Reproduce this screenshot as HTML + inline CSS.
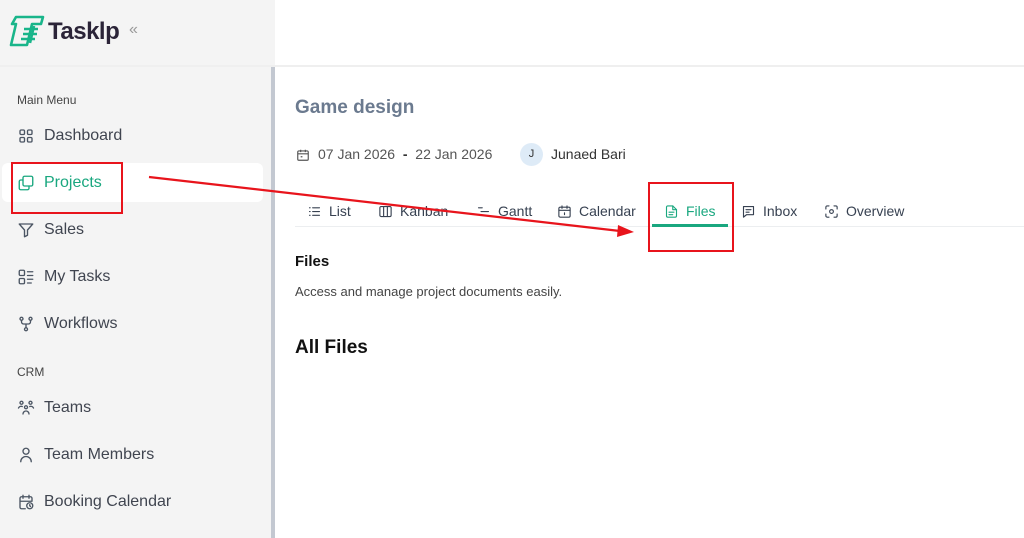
<!DOCTYPE html>
<html><head><meta charset="utf-8"><style>
*{margin:0;padding:0;box-sizing:border-box}
body{width:1024px;height:538px;overflow:hidden;background:#fff;font-family:"Liberation Sans",sans-serif;position:relative;color:#374151}
.a{position:absolute}
.side{left:0;top:0;width:275px;height:538px;background:#f4f4f4}
.hline{left:0;top:65px;width:1024px;height:2px;background:#efefef}
.sb{left:271px;top:67px;width:4px;height:471px;background:#c3c8d1}
.lbl{font-size:12px;color:#444}
.it{left:17px;font-size:16px;color:#404550;line-height:20px;height:20px}
.it span{position:absolute;left:27px;top:0;white-space:nowrap}
.it svg{position:absolute;left:0;top:1px;width:18px;height:18px;fill:none;stroke:#4b5563;stroke-width:1.8;stroke-linecap:round;stroke-linejoin:round}
.tab{top:203px;font-size:14px;color:#374151;line-height:16px;height:16px}
.tab span{position:absolute;left:22px;top:0;white-space:nowrap}
.tab svg{position:absolute;left:0;top:1px;width:15px;height:15px;fill:none;stroke:#374151;stroke-width:1.8;stroke-linecap:round;stroke-linejoin:round}
</style></head><body>
<div class="a side"></div>
<div class="a hline"></div>
<div class="a sb"></div>
<svg class="a" style="left:9px;top:15px" width="36" height="32" viewBox="0 0 36 32" fill="none" stroke="#19b58a" stroke-width="2.6" stroke-linejoin="round"><path d="M7 2H34L32 9H23L18 30H2L7 9H3Z"/><path d="M15 14H29M14 19H28M12 24H26"/><path d="M25 11L21 28"/></svg>
<div class="a" style="left:48px;top:18px;font-size:24px;font-weight:bold;color:#2b2438;letter-spacing:-0.5px">Tasklp</div>
<div class="a" style="left:129px;top:21px;font-size:16px;color:#999">«</div>

<div class="a lbl" style="left:17px;top:93px">Main Menu</div>
<div class="a" style="left:2px;top:163px;width:261px;height:39px;background:#fff;border-radius:6px"></div>
<div class="a it" style="top:126px"><svg viewBox="0 0 24 24"><rect x="4" y="4" width="6" height="6" rx="1.5"/><rect x="14" y="4" width="6" height="6" rx="1.5"/><rect x="4" y="14" width="6" height="6" rx="1.5"/><rect x="14" y="14" width="6" height="6" rx="1.5"/></svg><span>Dashboard</span></div>
<div class="a it" style="top:173px;color:#19a77f"><svg viewBox="0 0 24 24" style="stroke:#19a77f"><rect x="8" y="3" width="13" height="13" rx="2"/><path d="M16 16v3a2 2 0 0 1-2 2H5a2 2 0 0 1-2-2v-9a2 2 0 0 1 2-2h3"/></svg><span>Projects</span></div>
<div class="a it" style="top:220px"><svg viewBox="0 0 24 24"><path d="M3 4h18l-7 8v7l-4 2v-9z"/></svg><span>Sales</span></div>
<div class="a it" style="top:267px"><svg viewBox="0 0 24 24"><rect x="3" y="3" width="7" height="7" rx="1.5"/><rect x="3" y="14" width="7" height="7" rx="1.5"/><path d="M14 5h7M14 10h7M14 15h7M14 20h5"/></svg><span>My Tasks</span></div>
<div class="a it" style="top:314px"><svg viewBox="0 0 24 24"><circle cx="6" cy="5" r="2"/><circle cx="18" cy="5" r="2"/><circle cx="12" cy="19" r="2"/><path d="M6 7v2a3 3 0 0 0 3 3h6a3 3 0 0 0 3-3V7M12 12v5"/></svg><span>Workflows</span></div>
<div class="a lbl" style="left:17px;top:365px">CRM</div>
<div class="a it" style="top:398px"><svg viewBox="0 0 24 24"><circle cx="6" cy="5" r="2"/><circle cx="18" cy="5" r="2"/><circle cx="12" cy="11" r="2"/><path d="M2 12a4 4 0 0 1 5-2M22 12a4 4 0 0 0-5-2M8 20a4 4 0 0 1 8 0"/></svg><span>Teams</span></div>
<div class="a it" style="top:445px"><svg viewBox="0 0 24 24"><circle cx="12" cy="7" r="4"/><path d="M5 21a7 7 0 0 1 14 0"/></svg><span>Team Members</span></div>
<div class="a it" style="top:492px"><svg viewBox="0 0 24 24"><path d="M11 21H6a2 2 0 0 1-2-2V7a2 2 0 0 1 2-2h12a2 2 0 0 1 2 2v4M8 3v4M16 3v4M4 11h16"/><circle cx="17" cy="17" r="4"/><path d="M17 15.5V17l1 1"/></svg><span>Booking Calendar</span></div>

<div class="a" style="left:295px;top:97px;font-size:19px;font-weight:bold;color:#6b7a8f">Game design</div>
<svg class="a" style="left:296px;top:148px" width="14" height="14" viewBox="0 0 24 24" fill="none" stroke="#555" stroke-width="2"><rect x="3" y="5" width="18" height="16" rx="2"/><path d="M8 3v4M16 3v4M3 10h18M8 15h3"/></svg>
<div class="a" style="left:318px;top:146px;font-size:14px;color:#555">07 Jan 2026 &nbsp;<b style="color:#333">-</b>&nbsp; 22 Jan 2026</div>
<div class="a" style="left:520px;top:143px;width:23px;height:23px;border-radius:50%;background:#deebf7;font-size:11px;color:#333;text-align:center;line-height:23px">J</div>
<div class="a" style="left:551px;top:146px;font-size:14px;color:#333">Junaed Bari</div>

<div class="a" style="left:295px;top:226px;width:729px;height:1px;background:#eceef0"></div>
<div class="a tab" style="left:307px"><svg viewBox="0 0 24 24"><path d="M9 6h11M9 12h11M9 18h11M4 6h1M4 12h1M4 18h1"/></svg><span>List</span></div>
<div class="a tab" style="left:378px"><svg viewBox="0 0 24 24"><rect x="3" y="4" width="18" height="16" rx="2"/><path d="M9 4v16M15 4v16"/></svg><span>Kanban</span></div>
<div class="a tab" style="left:476px"><svg viewBox="0 0 24 24"><path d="M4 6h6M8 12h12M6 18h10"/></svg><span>Gantt</span></div>
<div class="a tab" style="left:557px"><svg viewBox="0 0 24 24"><rect x="3" y="5" width="18" height="16" rx="2"/><path d="M8 3v4M16 3v4M3 10h18M12 14v3"/></svg><span>Calendar</span></div>
<div class="a tab" style="left:664px;color:#19a77f"><svg viewBox="0 0 24 24" style="stroke:#19a77f"><path d="M14 3H6a2 2 0 0 0-2 2v14a2 2 0 0 0 2 2h12a2 2 0 0 0 2-2V9z"/><path d="M14 3v6h6M8 13h8M8 17h6"/></svg><span>Files</span></div>
<div class="a" style="left:652px;top:224px;width:76px;height:3px;background:#19a77f"></div>
<div class="a tab" style="left:741px"><svg viewBox="0 0 24 24"><path d="M4 4h16v13H9l-5 4z"/><path d="M8 9h8M8 13h5"/></svg><span>Inbox</span></div>
<div class="a tab" style="left:824px"><svg viewBox="0 0 24 24"><path d="M3 8V5a2 2 0 0 1 2-2h3M16 3h3a2 2 0 0 1 2 2v3M21 16v3a2 2 0 0 1-2 2h-3M8 21H5a2 2 0 0 1-2-2v-3"/><circle cx="12" cy="12" r="3"/></svg><span>Overview</span></div>

<div class="a" style="left:295px;top:253px;font-size:15px;font-weight:bold;color:#111">Files</div>
<div class="a" style="left:295px;top:284px;font-size:13px;color:#444">Access and manage project documents easily.</div>
<div class="a" style="left:295px;top:337px;font-size:19px;font-weight:bold;color:#111">All Files</div>

<div class="a" style="left:11px;top:162px;width:112px;height:52px;border:2px solid #e8141c"></div>
<div class="a" style="left:648px;top:182px;width:86px;height:70px;border:2px solid #e8141c"></div>
<svg class="a" style="left:0;top:0" width="1024" height="538"><line x1="149" y1="177" x2="620" y2="231" stroke="#e8141c" stroke-width="2.2"/><polygon points="634,232 618,225 617,237" fill="#e8141c"/></svg>
</body></html>
